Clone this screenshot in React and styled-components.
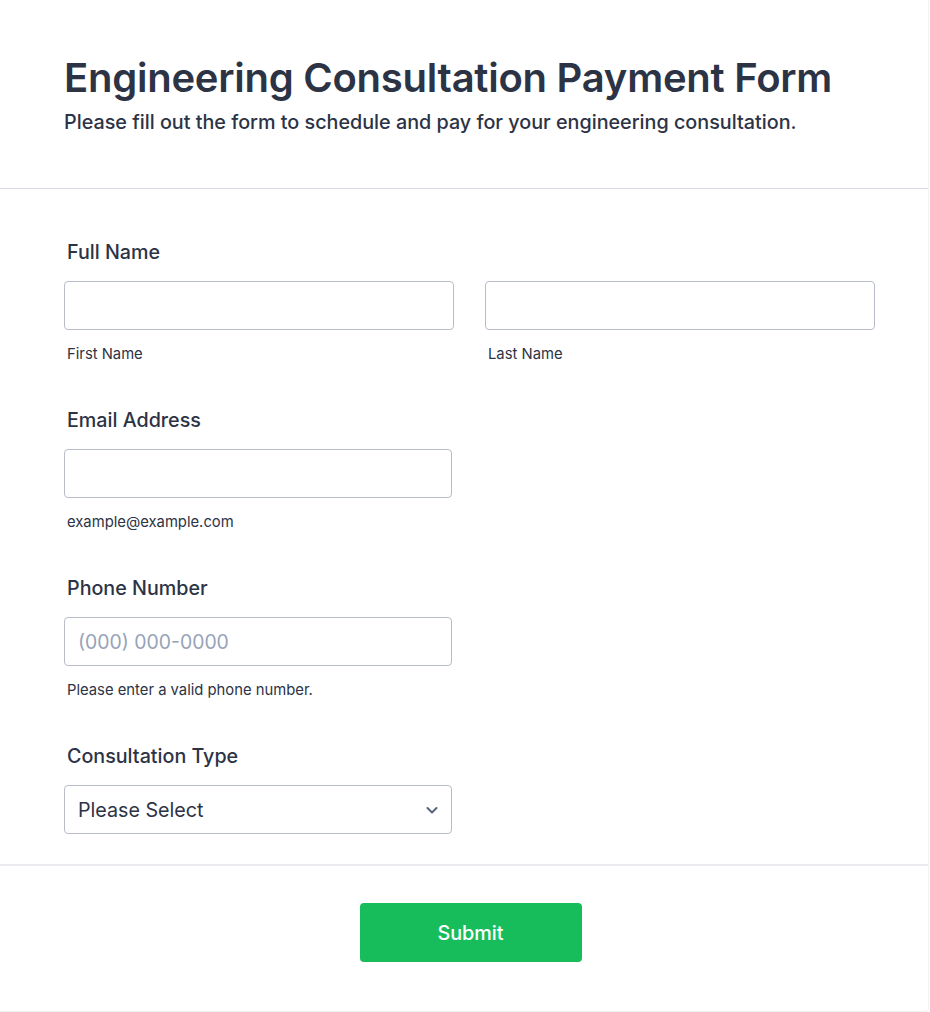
import React from "react";
import styled, { createGlobalStyle } from "styled-components";

const Global = createGlobalStyle`
  html, body { margin: 0; padding: 0; background: #ffffff; }
  body { font-family: Inter, "Noto Sans", sans-serif; color: #2c3345; }
  * { box-sizing: border-box; }
`;

const Card = styled.div`
  width: 929px;
  background: #fff;
  border-right: 1px solid #f1f1f6;
  border-bottom: 1px solid #f1f1f6;
  border-bottom-right-radius: 4px;
`;

const Header = styled.header`
  padding: 54px 64px 0;
  height: 189px;
  border-bottom: 1px solid #d8d8ec;
`;

const Title = styled.h1`
  margin: 0;
  font-size: 40px;
  line-height: 48px;
  font-weight: 600;
  letter-spacing: -0.25px;
  color: #2c3345;
`;

const Subtitle = styled.p`
  margin: 8px 0 0;
  font-size: 19.75px;
  line-height: 24px;
  font-weight: 500;
  color: #2c3345;
`;

const Body = styled.div`
  padding: 51px 54px 30px 64px;
  display: flex;
  flex-direction: column;
  gap: 45px;
  border-bottom: 2px solid #ebebf0;
`;

const Field = styled.div`
  display: flex;
  flex-direction: column;
`;

const Label = styled.label`
  font-size: 19.7px;
  line-height: 24px;
  font-weight: 500;
  padding-left: 3px;
  margin-bottom: 17px;
  color: #2c3345;
`;

const Row = styled.div`
  display: flex;
  gap: 31px;
`;

const Col = styled.div`
  display: flex;
  flex-direction: column;
  flex: none;
  width: ${(p) => p.$w}px;
`;

const Input = styled.input`
  width: 100%;
  height: 49px;
  border: 1px solid #b8bdc9;
  border-radius: 4px;
  padding: 0 13px;
  font-family: Inter, "Noto Sans", sans-serif;
  font-size: 19.4px;
  color: #2c3345;
  background: #fff;
  outline: none;
  &::placeholder { color: #97a3b8; }
`;

const Sub = styled.span`
  margin-top: 15px;
  font-size: 14.8px;
  line-height: 18px;
  padding-left: 3px;
  color: #2c3345;
`;

const SelectBox = styled.div`
  width: 388px;
  height: 49px;
  border: 1px solid #b8bdc9;
  border-radius: 4px;
  padding: 0 12px 0 13px;
  display: flex;
  align-items: center;
  justify-content: space-between;
  font-size: 19.7px;
  color: #2c3345;
`;

const Footer = styled.div`
  display: flex;
  justify-content: center;
  padding: 37px 0 49px;
`;

const Button = styled.button`
  width: 222px;
  height: 59px;
  background: #18bd5b;
  border: none;
  border-radius: 4px;
  color: #fff;
  font-family: Inter, "Noto Sans", sans-serif;
  font-size: 19.8px;
  font-weight: 500;
  margin-left: 13px;
`;

export default function App() {
  return (
    <>
      <Global />
      <Card>
        <Header>
          <Title>Engineering Consultation Payment Form</Title>
          <Subtitle>Please fill out the form to schedule and pay for your engineering consultation.</Subtitle>
        </Header>
        <Body>
          <Field>
            <Label>Full Name</Label>
            <Row>
              <Col $w={390}>
                <Input />
                <Sub>First Name</Sub>
              </Col>
              <Col $w={390}>
                <Input />
                <Sub>Last Name</Sub>
              </Col>
            </Row>
          </Field>
          <Field>
            <Label>Email Address</Label>
            <Col $w={388}>
              <Input />
              <Sub>example@example.com</Sub>
            </Col>
          </Field>
          <Field>
            <Label>Phone Number</Label>
            <Col $w={388}>
              <Input placeholder="(000) 000-0000" />
              <Sub>Please enter a valid phone number.</Sub>
            </Col>
          </Field>
          <Field>
            <Label>Consultation Type</Label>
            <SelectBox>
              <span>Please Select</span>
              <svg width="14" height="14" viewBox="0 0 14 14">
                <path d="M2.5 5 L7 9.5 L11.5 5" fill="none" stroke="#57647e" strokeWidth="2" strokeLinecap="round" strokeLinejoin="round" />
              </svg>
            </SelectBox>
          </Field>
        </Body>
        <Footer>
          <Button>Submit</Button>
        </Footer>
      </Card>
    </>
  );
}
